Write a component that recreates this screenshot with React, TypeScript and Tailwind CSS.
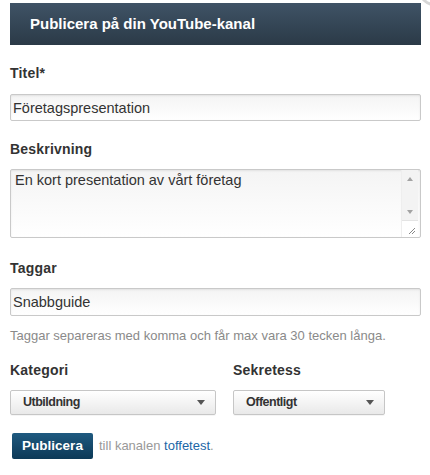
const font = { fontFamily: '"Liberation Sans", Arial, sans-serif' };

const Label = ({ children }: { children: React.ReactNode }) => (
  <div className="text-[14px] leading-4 font-bold tracking-[0.2px] text-[#333]">{children}</div>
);

const fieldClass =
  "w-full border border-[#c9c9c9] rounded-[2px] bg-gradient-to-b from-[#f4f4f4] to-white shadow-[inset_0_1px_2px_rgba(0,0,0,0.08)] px-[2px] text-[14.5px] text-[#333] outline-none";

const SelectBox = ({ value, width }: { value: string; width: string }) => (
  <div
    className={`${width} h-[25px] flex items-center justify-between border border-[#c6c6c6] rounded-[2px] bg-gradient-to-b from-white to-[#e9e9e9] pl-3 pr-[10px] shadow-[0_1px_0_rgba(0,0,0,0.04)]`}
  >
    <span className="text-[12.5px] font-bold tracking-[-0.5px] text-[#333]">{value}</span>
    <span className="w-0 h-0 border-l-[4px] border-r-[4px] border-t-[5px] border-l-transparent border-r-transparent border-t-[#555]" />
  </div>
);

export default function App() {
  return (
    <div className="relative w-[430px] h-[475px] bg-white overflow-hidden" style={font}>
      {/* clipped close button of the dialog */}
      <div className="absolute left-[419px] top-[-24px] w-[30px] h-[30px] rounded-full border-[3px] border-[#d6d6d6] bg-white" />

      <div className="pt-[3px] pl-[10px] w-[421px]">
        <div className="h-[42px] flex items-center pl-5 bg-gradient-to-b from-[#3f5366] to-[#2b3a47]">
          <h2 className="text-[15px] font-bold text-white">Publicera på din YouTube-kanal</h2>
        </div>

        <div className="mt-5">
          <Label>Titel*</Label>
          <input className={`${fieldClass} mt-[13px] h-[27px]`} defaultValue="Företagspresentation" />
        </div>

        <div className="mt-5">
          <Label>Beskrivning</Label>
          <div className={`${fieldClass} mt-3 h-[69px] flex p-0`}>
            <div className="flex-1 px-[2px] pt-[1px] leading-[18px]">En kort presentation av vårt företag</div>
            <div className="w-[17px] flex flex-col border-l border-[#eee] bg-[#f3f3f3]">
              <div className="h-[17px] flex items-center justify-center">
                <span className="w-0 h-0 border-l-[3px] border-r-[3px] border-b-[4px] border-l-transparent border-r-transparent border-b-[#a3a3a3]" />
              </div>
              <div className="flex-1" />
              <div className="h-[17px] flex items-center justify-center">
                <span className="w-0 h-0 border-l-[3px] border-r-[3px] border-t-[4px] border-l-transparent border-r-transparent border-t-[#a3a3a3]" />
              </div>
              <div className="h-[17px] bg-white border-t border-[#e4e4e4] flex items-end justify-end p-[2px]">
                <svg width="9" height="9" viewBox="0 0 9 9">
                  <path d="M8 2 L2 8 M8 5 L5 8" stroke="#888" strokeWidth="1" />
                </svg>
              </div>
            </div>
          </div>
        </div>

        <div className="mt-[22px]">
          <Label>Taggar</Label>
          <input className={`${fieldClass} mt-3 h-[28px]`} defaultValue="Snabbguide" />
          <p className="mt-[12px] text-[13px] leading-4 text-[#8a8a8a]">
            Taggar separeras med komma och får max vara 30 tecken långa.
          </p>
        </div>

        <div className="mt-[18px] flex gap-[17px]">
          <div>
            <Label>Kategori</Label>
            <div className="mt-3">
              <SelectBox value="Utbildning" width="w-[206px]" />
            </div>
          </div>
          <div>
            <Label>Sekretess</Label>
            <div className="mt-3">
              <SelectBox value="Offentligt" width="w-[152px]" />
            </div>
          </div>
        </div>

        <div className="mt-[18px] flex items-center gap-[6px] pl-[2px]">
          <button className="h-[26px] w-[81px] rounded-[2px] bg-gradient-to-b from-[#1f5a80] to-[#0c3957] text-[13.5px] font-bold text-white">
            Publicera
          </button>
          <span className="text-[13px] text-[#999]">
            till kanalen <a className="text-[#1c66a6]">toffetest</a>.
          </span>
        </div>
      </div>
    </div>
  );
}
